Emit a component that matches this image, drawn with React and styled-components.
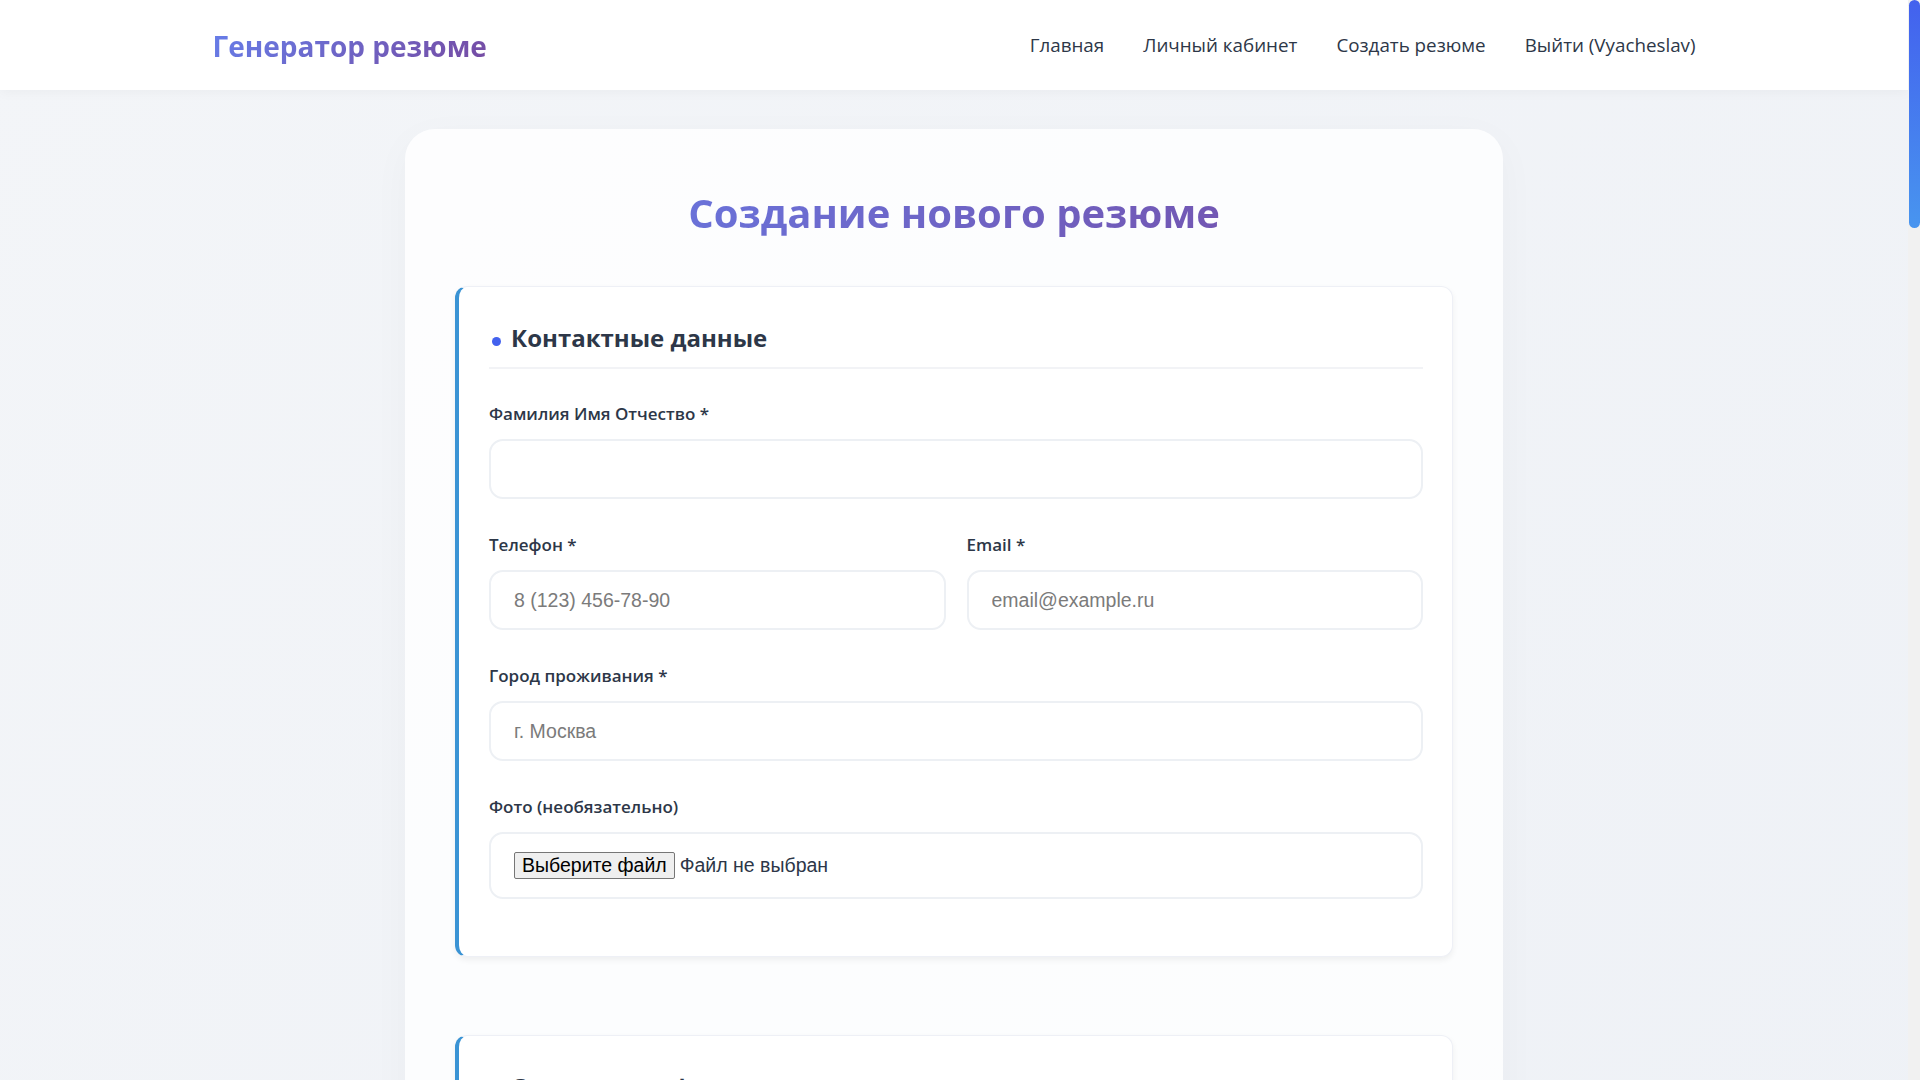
import styled, { createGlobalStyle } from "styled-components";

const GlobalStyle = createGlobalStyle`
  * {
    box-sizing: border-box;
  }

  html {
    scrollbar-width: none;
  }

  body {
    margin: 0;
    font-family: "Open Sans", "Noto Sans", sans-serif;
    color: #2d3748;
    background: linear-gradient(135deg, #f3f5f8 0%, #eef1f6 50%, #f0f3f8 100%);
    min-height: 100vh;
  }
`;

const sections = [
  {
    title: "Основная информация",
    rows: [
      [{ label: "Желаемая должность *", placeholder: "например, Frontend-разработчик" }],
      [
        { label: "Желаемая зарплата", placeholder: "100 000 ₽" },
        { label: "Тип занятости", placeholder: "Полная занятость" },
      ],
      [{ label: "График работы", placeholder: "Полный день" }],
      [{ label: "О себе", placeholder: "Расскажите кратко о себе", area: true }],
    ],
  },
  {
    title: "Опыт работы",
    rows: [
      [{ label: "Компания", placeholder: "ООО «Компания»" }],
      [{ label: "Должность", placeholder: "Менеджер проектов" }],
      [
        { label: "Дата начала", placeholder: "01.2020" },
        { label: "Дата окончания", placeholder: "по настоящее время" },
      ],
      [{ label: "Обязанности и достижения", placeholder: "Опишите ваши обязанности", area: true }],
    ],
  },
  {
    title: "Образование",
    rows: [
      [{ label: "Учебное заведение", placeholder: "МГУ им. М. В. Ломоносова" }],
      [
        { label: "Специальность", placeholder: "Прикладная информатика" },
        { label: "Год окончания", placeholder: "2019" },
      ],
      [{ label: "Уровень образования", placeholder: "Высшее" }],
    ],
  },
  {
    title: "Навыки и языки",
    rows: [
      [{ label: "Ключевые навыки", placeholder: "JavaScript, React, SQL", area: true }],
      [
        { label: "Иностранный язык", placeholder: "Английский" },
        { label: "Уровень", placeholder: "B2 — выше среднего" },
      ],
      [{ label: "Водительские права", placeholder: "Категория B" }],
    ],
  },
  {
    title: "Дополнительно",
    rows: [
      [{ label: "Хобби и интересы", placeholder: "Путешествия, спорт", area: true }],
      [{ label: "Рекомендации", placeholder: "Контакты рекомендателей", area: true }],
    ],
  },
];

const Field = ({ field }) => (
  <Group>
    <Label>{field.label}</Label>
    {field.area ? (
      <TextArea placeholder={field.placeholder} />
    ) : (
      <Input type="text" placeholder={field.placeholder} />
    )}
  </Group>
);

const App = () => {
  return (
    <>
      <GlobalStyle />
      <Page>
        <Header>
          <HeaderInner>
            <Logo>Генератор резюме</Logo>
            <Nav>
              <NavLink href="#">Главная</NavLink>
              <NavLink href="#">Личный кабинет</NavLink>
              <NavLink href="#">Создать резюме</NavLink>
              <NavLink href="#">Выйти (Vyacheslav)</NavLink>
            </Nav>
          </HeaderInner>
        </Header>

        <Main>
          <Card>
            <Title>Создание нового резюме</Title>

            <Section>
              <SectionTitle>Контактные данные</SectionTitle>
              <Group>
                <Label>Фамилия Имя Отчество *</Label>
                <Input type="text" />
              </Group>
              <Row>
                <Group>
                  <Label>Телефон *</Label>
                  <Input type="text" placeholder="8 (123) 456-78-90" />
                </Group>
                <Group>
                  <Label>Email *</Label>
                  <Input type="text" placeholder="email@example.ru" />
                </Group>
              </Row>
              <Group>
                <Label>Город проживания *</Label>
                <Input type="text" placeholder="г. Москва" />
              </Group>
              <Group>
                <Label>Фото (необязательно)</Label>
                <FileBox>
                  <HiddenFile type="file" />
                  <FileButton>Выберите файл</FileButton>
                  <FileName>Файл не выбран</FileName>
                </FileBox>
              </Group>
            </Section>

            {sections.map((s) => (
              <Section key={s.title}>
                <SectionTitle>{s.title}</SectionTitle>
                {s.rows.map((row, i) =>
                  row.length > 1 ? (
                    <Row key={i}>
                      {row.map((f) => (
                        <Field key={f.label} field={f} />
                      ))}
                    </Row>
                  ) : (
                    <Field key={i} field={row[0]} />
                  )
                )}
              </Section>
            ))}

            <Actions>
              <SubmitButton type="button">Создать резюме</SubmitButton>
            </Actions>
          </Card>
        </Main>
      </Page>

      {/* свой скроллбар: в headless браузере системный не рисуется */}
      <ScrollTrack>
        <ScrollThumb />
      </ScrollTrack>
    </>
  );
};

export default App;

const Page = styled.div`
  margin-right: 12px;
`;

const ScrollTrack = styled.div`
  position: fixed;
  top: 0;
  right: 0;
  width: 12px;
  height: 100vh;
  background: #f1f1f1;
`;

const ScrollThumb = styled.div`
  width: 11px;
  margin-left: 1px;
  height: 228px;
  border-radius: 6px;
  background: linear-gradient(180deg, #4361ee 0%, #4895ef 100%);
`;

const Header = styled.header`
  height: 90px;
  background: #ffffff;
  box-shadow: 0 2px 12px rgba(0, 0, 0, 0.04);
`;

const HeaderInner = styled.div`
  max-width: 1483px;
  height: 100%;
  margin: 0 auto;
  display: flex;
  align-items: center;
  justify-content: space-between;
`;

const Logo = styled.div`
  font-size: 28px;
  font-weight: 700;
  background: linear-gradient(135deg, #667eea 0%, #764ba2 100%);
  -webkit-background-clip: text;
  background-clip: text;
  color: transparent;
  padding-top: 1px;
`;

const Nav = styled.nav`
  display: flex;
  gap: 39px;
`;

const NavLink = styled.a`
  font-size: 18.8px;
  color: #2d3748;
  text-decoration: none;
`;

const Main = styled.main`
  padding: 39px 0 60px;
`;

const Card = styled.div`
  max-width: 1098px;
  margin: 0 auto;
  padding: 50px;
  background: rgba(255, 255, 255, 0.8);
  border-radius: 30px;
  box-shadow: 0 10px 40px rgba(0, 0, 0, 0.03);
`;

const Title = styled.h1`
  margin: 10px 0 49px;
  text-align: center;
  font-size: 40px;
  line-height: 48px;
  font-weight: 700;
  background: linear-gradient(135deg, #667eea 0%, #764ba2 100%);
  -webkit-background-clip: text;
  background-clip: text;
  color: transparent;
`;

const Section = styled.section`
  background: #ffffff;
  border: 1px solid #eef0f6;
  border-left: 4px solid #3a93d4;
  border-radius: 12px;
  padding: 34px 29px 23px 30px;
  margin-bottom: 78px;
  box-shadow: 0 3px 6px rgba(0, 0, 0, 0.06);
`;

const SectionTitle = styled.h2`
  display: flex;
  align-items: center;
  gap: 10px;
  margin: 0 0 33px;
  padding-bottom: 12px;
  border-bottom: 2px solid #f2f3f6;
  font-size: 24px;
  line-height: 34px;
  font-weight: 700;
  color: #2d3748;

  &::before {
    content: "";
    width: 9px;
    height: 9px;
    margin: 6px 0 0 3px;
    border-radius: 50%;
    background: #4361ee;
  }
`;

const Row = styled.div`
  display: grid;
  grid-template-columns: 1fr 1fr;
  gap: 21px;
`;

const Group = styled.div`
  margin-bottom: 34px;
`;

const Label = styled.label`
  display: block;
  margin-bottom: 13px;
  font-size: 17px;
  line-height: 24px;
  font-weight: 600;
  color: #2d3748;
`;

const Input = styled.input`
  display: block;
  width: 100%;
  height: 60px;
  padding: 0 23px;
  border: 2px solid #edf0f4;
  border-radius: 14px;
  background: #ffffff;
  font-family: "Liberation Sans", Arial, sans-serif;
  font-size: 19.5px;
  color: #2d3748;
  outline: none;

  &::placeholder {
    color: #7b7b7b;
  }
`;

const TextArea = styled.textarea`
  display: block;
  width: 100%;
  height: 140px;
  padding: 18px 23px;
  border: 2px solid #edf0f4;
  border-radius: 14px;
  background: #ffffff;
  font-family: "Liberation Sans", Arial, sans-serif;
  font-size: 19.5px;
  color: #2d3748;
  resize: none;
  outline: none;

  &::placeholder {
    color: #7b7b7b;
  }
`;

const FileBox = styled.label`
  display: flex;
  align-items: center;
  gap: 5px;
  height: 67px;
  padding: 0 23px;
  border: 2px solid #edf0f4;
  border-radius: 14px;
  background: #ffffff;
  font-family: "Liberation Sans", Arial, sans-serif;
  font-size: 19.5px;
  cursor: pointer;
`;

const HiddenFile = styled.input`
  display: none;
`;

const FileButton = styled.span`
  display: inline-flex;
  align-items: center;
  height: 27px;
  padding: 0 7px;
  background: #efefef;
  border: 1px solid #767676;
  border-radius: 2px;
  color: #000000;
`;

const FileName = styled.span`
  color: #2d3748;
`;

const Actions = styled.div`
  display: flex;
  justify-content: center;
  padding: 10px 0 20px;
`;

const SubmitButton = styled.button`
  padding: 18px 60px;
  border: none;
  border-radius: 14px;
  background: linear-gradient(135deg, #667eea 0%, #764ba2 100%);
  color: #ffffff;
  font-family: "Open Sans", sans-serif;
  font-size: 20px;
  font-weight: 600;
  cursor: pointer;
`;
